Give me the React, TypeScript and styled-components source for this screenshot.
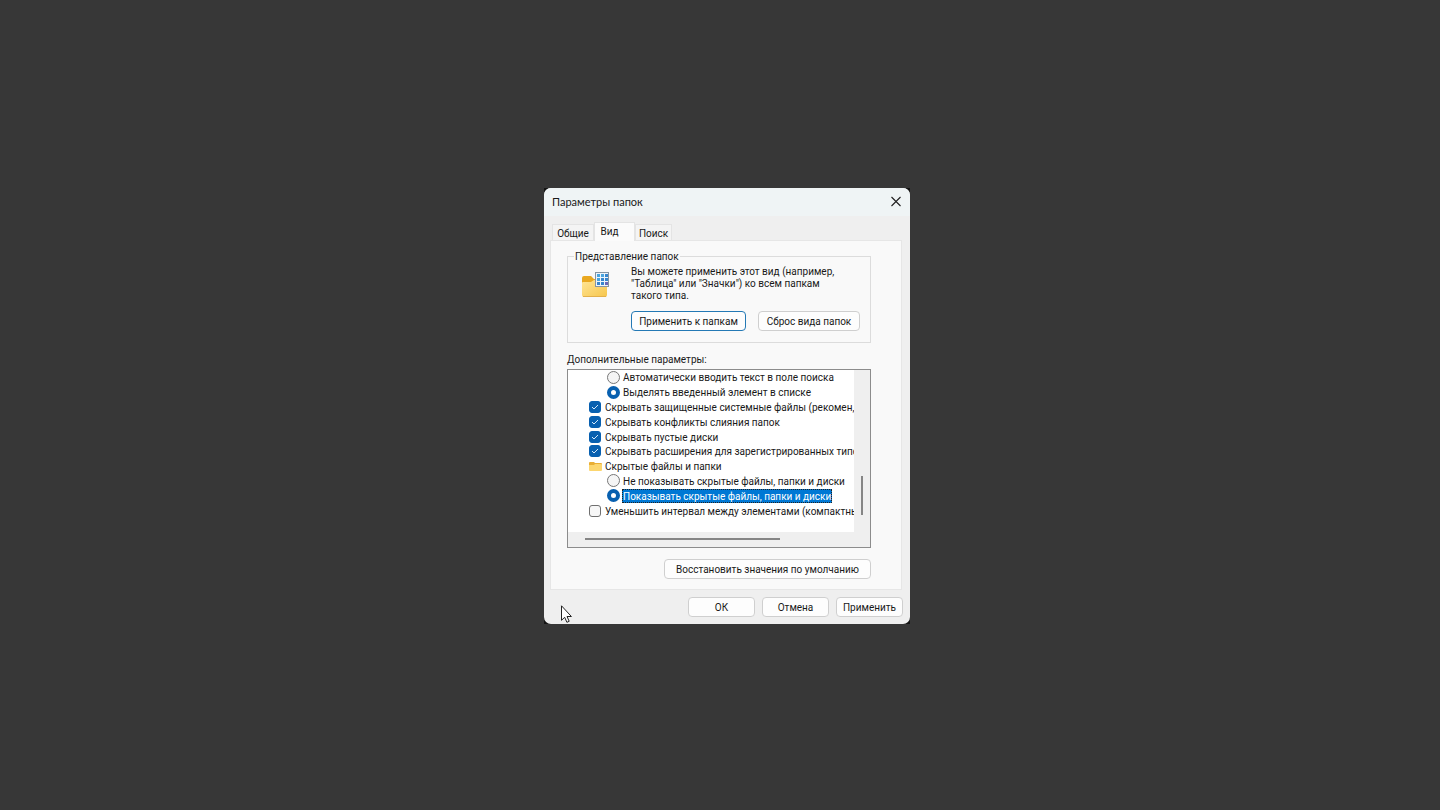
import React from "react";
import styled, { createGlobalStyle, css } from "styled-components";

const GlobalStyle = createGlobalStyle`
  * { box-sizing: border-box; }
  body {
    margin: 0;
    background: #373737;
    color: #191919;
    font-family: Roboto, "Liberation Sans", sans-serif;
    font-size: 10px;
    line-height: 12px;
  }
  button, input { font: inherit; color: inherit; margin: 0; }
`;

const Desktop = styled.main`
  min-height: 100vh;
  display: flex;
  align-items: center;
  justify-content: center;
  padding: 2px 0 0 14px;
`;

const Frame = styled.div`
  position: relative;
  background: #141414;
`;

const Dialog = styled.section`
  width: 366px;
  background: #efefef;
  border-radius: 7px;
  overflow: hidden;
`;

const TitleBar = styled.header`
  display: flex;
  align-items: center;
  justify-content: space-between;
  height: 28px;
  padding: 0 8px;
  background: #eff4f5;
`;

const Title = styled.h1`
  margin: 0;
  font-family: Lato, "Noto Sans", sans-serif;
  font-size: 11px;
  font-weight: 400;
`;

const CloseButton = styled.button`
  display: flex;
  width: 12px;
  height: 12px;
  padding: 0;
  border: 0;
  background: none;
`;

const Tabs = styled.div`
  display: flex;
  align-items: flex-end;
  height: 24px;
  margin-left: 8px;
`;

const Tab = styled.button<{ $width: number; $active?: boolean }>`
  height: 16px;
  width: ${(p) => p.$width}px;
  padding: 2px 0 0;
  border: 1px solid #e4e4e4;
  border-bottom: 0;
  background: #f4f4f4;
  white-space: nowrap;
  ${(p) =>
    p.$active &&
    css`
      height: 19px;
      padding: 0 10px 0 0;
      margin-bottom: -1px;
      background: #fbfbfb;
      z-index: 1;
    `}
`;

const Panel = styled.div`
  display: flex;
  flex-direction: column;
  margin: 0 8px 0 6px;
  padding: 8px 30px 10px 16px;
  border: 1px solid #e6e6e6;
  background: #f9f9f9;
`;

const Group = styled.fieldset`
  margin: 0;
  min-width: 0;
  height: 94px;
  padding: 3px 10px 0 14px;
  border: 1px solid #dcdcdc;
`;

const Legend = styled.legend`
  margin-left: -8px;
  padding: 2px 1px 0;
`;

const Intro = styled.div`
  display: flex;
  gap: 21px;
  margin-bottom: 9px;
  svg { margin-top: 6px; }
  p { margin: 0; white-space: nowrap; }
`;

const Actions = styled.div<{ $gap: number }>`
  display: flex;
  justify-content: flex-end;
  gap: ${(p) => p.$gap}px;
`;

const PushButton = styled.button<{ $width: number; $primary?: boolean }>`
  width: ${(p) => p.$width}px;
  height: 20px;
  padding: 2px 0 0;
  border: 1px solid ${(p) => (p.$primary ? "#2479b5" : "#cfcfcf")};
  border-radius: 4px;
  background: #fdfdfd;
  white-space: nowrap;
`;

const ListLabel = styled.div`
  margin: 11px 0 3px;
`;

const ListBox = styled.div`
  display: grid;
  grid-template-columns: 1fr 16px;
  grid-template-rows: 162px 15px;
  border: 1px solid #8c8c8c;
  background: #efefef;
  margin-bottom: 11px;
`;

const Rows = styled.div`
  display: grid;
  grid-auto-rows: 1fr;
  padding: 0 0 14px;
  background: #ffffff;
  overflow: hidden;
`;

const Row = styled.label<{ $level: number }>`
  display: flex;
  align-items: center;
  gap: 2px;
  min-width: 0;
  padding-left: ${(p) => (p.$level === 2 ? 39 : 21)}px;
  white-space: nowrap;
`;

const RowText = styled.span<{ $selected?: boolean }>`
  height: 14px;
  padding: 2px 1px 0;
  line-height: 12px;
  ${(p) =>
    p.$selected &&
    css`
      background: #0078d4;
      color: #ffffff;
      outline: 1px dotted #222222;
      outline-offset: -1px;
    `}
`;

const Radio = styled.input`
  appearance: none;
  flex: none;
  width: 13px;
  height: 13px;
  border: 1px solid #777777;
  border-radius: 50%;
  background: #f5f5f5;
  &:checked { border: 4px solid #0860b0; background: #ffffff; }
`;

const TickWrap = styled.span`
  position: relative;
  display: flex;
  flex: none;
  width: 13px;
  svg { position: absolute; inset: 0; pointer-events: none; }
`;

const Tick = styled.input`
  appearance: none;
  width: 12px;
  height: 12px;
  border: 1px solid #707070;
  border-radius: 3px;
  background: #f7f7f7;
  &:checked { border-color: #0860b0; background: #0860b0; }
`;

const VerticalTrack = styled.div`
  padding: 106px 0 0 7px;
  &::before { content: ""; display: block; width: 2px; height: 39px; background: #858585; }
`;

const HorizontalTrack = styled.div`
  padding: 6px 0 0 17px;
  &::before { content: ""; display: block; width: 195px; height: 2px; background: #858585; }
`;

const Footer = styled.footer`
  padding: 7px;
`;

const Pointer = styled.svg`
  position: absolute;
  left: 16px;
  bottom: 0;
`;

const FolderGrid = () => (
  <svg width="28" height="28" viewBox="0 0 28 28" aria-hidden="true">
    <defs>
      <linearGradient id="folder" x1="0" y1="0" x2="1" y2="1">
        <stop offset="0" stopColor="#ffe596" />
        <stop offset="1" stopColor="#f6c64c" />
      </linearGradient>
    </defs>
    <path d="M0 6q0-2 2-2h7l3 3h11q2 0 2 2v8H0z" fill="#e9a820" />
    <path d="M0 11q0-1 1-1h8l3-2h11q2 0 2 2v13q0 2-2 2H2q-2 0-2-2z" fill="url(#folder)" />
    <path d="M1 24.5h23" stroke="#e3b04a" />
    <rect x="13.500" y="0.500" width="13" height="14" fill="#eef5fb" stroke="#8594a3" />
    {[2, 6, 10].map((y, r) =>
      [15, 19, 23].map((x, c) => (
        <rect key={`${x}-${y}`} x={x} y={y} width="3" height="3" fill={["#4aa5df", "#3886cd", "#6a67b9"][Math.floor((r + c) / 2)]} />
      ))
    )}
  </svg>
);

const SmallFolder = () => (
  <svg width="13" height="13" viewBox="0 0 13 13" aria-hidden="true">
    <path d="M0 3q0-1 1-1h4l1 1h6q1 0 1 1v4H0z" fill="#e9ae35" />
    <path d="M0 5h5l1-1h6q1 0 1 1v5q0 1-1 1H1q-1 0-1-1z" fill="#fcd66f" />
  </svg>
);

type Item = { kind: "radio" | "check" | "folder"; text: string; on?: boolean; group?: string; selected?: boolean };

const items: Item[] = [
  { kind: "radio", text: "Автоматически вводить текст в поле поиска", group: "typing" },
  { kind: "radio", text: "Выделять введенный элемент в списке", group: "typing", on: true },
  { kind: "check", text: "Скрывать защищенные системные файлы (рекомен,", on: true },
  { kind: "check", text: "Скрывать конфликты слияния папок", on: true },
  { kind: "check", text: "Скрывать пустые диски", on: true },
  { kind: "check", text: "Скрывать расширения для зарегистрированных типо", on: true },
  { kind: "folder", text: "Скрытые файлы и папки" },
  { kind: "radio", text: "Не показывать скрытые файлы, папки и диски", group: "hidden" },
  { kind: "radio", text: "Показывать скрытые файлы, папки и диски", group: "hidden", on: true, selected: true },
  { kind: "check", text: "Уменьшить интервал между элементами (компактны" },
];

const SettingRow = ({ item }: { item: Item }) => (
  <Row $level={item.kind === "radio" ? 2 : 1} as={item.kind === "folder" ? "div" : "label"}>
    {item.kind === "radio" && <Radio type="radio" name={item.group} defaultChecked={item.on} />}
    {item.kind === "check" && (
      <TickWrap>
        <Tick type="checkbox" defaultChecked={item.on} />
        {item.on && (
          <svg width="12" height="12" viewBox="0 0 12 12" fill="none" stroke="#d5e8f8">
            <path d="M3 6l2 2 4-4" />
          </svg>
        )}
      </TickWrap>
    )}
    {item.kind === "folder" && <SmallFolder />}
    <RowText $selected={item.selected}>{item.text}</RowText>
  </Row>
);

export default function App() {
  return (
    <>
      <GlobalStyle />
      <Desktop>
        <Frame>
          <Dialog role="dialog" aria-labelledby="title">
            <TitleBar>
              <Title id="title">Параметры папок</Title>
              <CloseButton aria-label="Закрыть">
                <svg width="12" height="12" viewBox="0 0 12 12" stroke="#202020" strokeWidth="1.1">
                  <path d="M1.500 1l9 9M10.500 1l-9 9" />
                </svg>
              </CloseButton>
            </TitleBar>
            <Tabs role="tablist">
              <Tab role="tab" $width={42}>Общие</Tab>
              <Tab role="tab" aria-selected="true" $width={41} $active>Вид</Tab>
              <Tab role="tab" $width={37}>Поиск</Tab>
            </Tabs>
            <Panel role="tabpanel">
              <Group>
                <Legend>Представление папок</Legend>
                <Intro>
                  <FolderGrid />
                  <p>
                    Вы можете применить этот вид (например,<br />
                    "Таблица" или "Значки") ко всем папкам<br />
                    такого типа.
                  </p>
                </Intro>
                <Actions $gap={12}>
                  <PushButton $width={115} $primary>Применить к папкам</PushButton>
                  <PushButton $width={102}>Сброс вида папок</PushButton>
                </Actions>
              </Group>
              <ListLabel id="extra">Дополнительные параметры:</ListLabel>
              <ListBox role="group" aria-labelledby="extra">
                <Rows>
                  {items.map((item) => <SettingRow key={item.text} item={item} />)}
                </Rows>
                <VerticalTrack />
                <HorizontalTrack />
              </ListBox>
              <Actions $gap={0}>
                <PushButton $width={207}>Восстановить значения по умолчанию</PushButton>
              </Actions>
            </Panel>
            <Footer>
              <Actions $gap={7}>
                <PushButton $width={67}>ОК</PushButton>
                <PushButton $width={67}>Отмена</PushButton>
                <PushButton $width={67}>Применить</PushButton>
              </Actions>
            </Footer>
          </Dialog>
          <Pointer width="13" height="19" viewBox="0 0 13 19" fill="#ffffff" stroke="#222222" aria-hidden="true">
            <path d="M1.500.8v14.500l3.200-3 2.200 5 2.300-1-2.200-4.800h4.400z" />
          </Pointer>
        </Frame>
      </Desktop>
    </>
  );
}
